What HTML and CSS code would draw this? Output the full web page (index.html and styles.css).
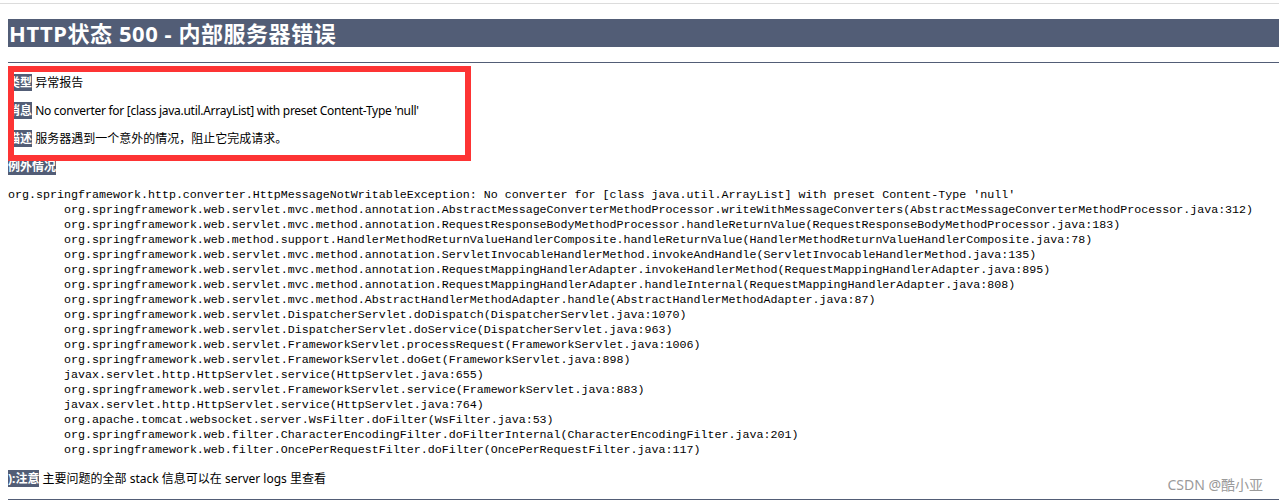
FILE: index.html
```html
<!DOCTYPE html>
<html lang="zh">
<head>
    <meta charset="UTF-8">
    <meta name="viewport" content="width=device-width, initial-scale=1.0">
    <title>HTTP状态 500 - 内部服务器错误</title>
    <link rel="stylesheet" href="styles.css">
</head>
<body>
    <div class="topline"></div>
    <div class="page">
        <h1>HTTP状态 500 - 内部服务器错误</h1>
        <hr class="line">
        <p><b>类型</b> 异常报告</p>
        <p><b>消息</b> <span class="msg">No converter for [class java.util.ArrayList] with preset Content-Type 'null'</span></p>
        <p><b>描述</b> 服务器遇到一个意外的情况，阻止它完成请求。</p>
        <p><b>例外情况</b></p>
<pre>org.springframework.http.converter.HttpMessageNotWritableException: No converter for [class java.util.ArrayList] with preset Content-Type 'null'
&#9;org.springframework.web.servlet.mvc.method.annotation.AbstractMessageConverterMethodProcessor.writeWithMessageConverters(AbstractMessageConverterMethodProcessor.java:312)
&#9;org.springframework.web.servlet.mvc.method.annotation.RequestResponseBodyMethodProcessor.handleReturnValue(RequestResponseBodyMethodProcessor.java:183)
&#9;org.springframework.web.method.support.HandlerMethodReturnValueHandlerComposite.handleReturnValue(HandlerMethodReturnValueHandlerComposite.java:78)
&#9;org.springframework.web.servlet.mvc.method.annotation.ServletInvocableHandlerMethod.invokeAndHandle(ServletInvocableHandlerMethod.java:135)
&#9;org.springframework.web.servlet.mvc.method.annotation.RequestMappingHandlerAdapter.invokeHandlerMethod(RequestMappingHandlerAdapter.java:895)
&#9;org.springframework.web.servlet.mvc.method.annotation.RequestMappingHandlerAdapter.handleInternal(RequestMappingHandlerAdapter.java:808)
&#9;org.springframework.web.servlet.mvc.method.AbstractHandlerMethodAdapter.handle(AbstractHandlerMethodAdapter.java:87)
&#9;org.springframework.web.servlet.DispatcherServlet.doDispatch(DispatcherServlet.java:1070)
&#9;org.springframework.web.servlet.DispatcherServlet.doService(DispatcherServlet.java:963)
&#9;org.springframework.web.servlet.FrameworkServlet.processRequest(FrameworkServlet.java:1006)
&#9;org.springframework.web.servlet.FrameworkServlet.doGet(FrameworkServlet.java:898)
&#9;javax.servlet.http.HttpServlet.service(HttpServlet.java:655)
&#9;org.springframework.web.servlet.FrameworkServlet.service(FrameworkServlet.java:883)
&#9;javax.servlet.http.HttpServlet.service(HttpServlet.java:764)
&#9;org.apache.tomcat.websocket.server.WsFilter.doFilter(WsFilter.java:53)
&#9;org.springframework.web.filter.CharacterEncodingFilter.doFilterInternal(CharacterEncodingFilter.java:201)
&#9;org.springframework.web.filter.OncePerRequestFilter.doFilter(OncePerRequestFilter.java:117)
</pre>
        <p><b class="note">):注意</b> 主要问题的全部 stack 信息可以在 server logs 里查看</p>
        <hr class="line">
    </div>

    <!-- screenshot annotation + watermark -->
    <div class="highlight"></div>
    <div class="watermark">CSDN @酷小亚</div>
</body>
</html>
```

FILE: styles.css
```css
body {
    margin: 0;
    background: white;
    overflow: hidden;
    position: relative;
    height: 501px;
}

.topline {
    height: 3px;
    border-bottom: 1px solid #dcdcdc;
}

.page {
    padding-left: 8px;
}

h1 {
    font-family: "Noto Sans", "Noto Sans CJK SC", sans-serif;
    font-size: 22px;
    font-weight: bold;
    letter-spacing: 0.55px;
    line-height: 28px;
    height: 28px;
    color: white;
    background-color: #525D76;
    margin: 15px 0 15px 0;
    padding-left: 1px;
    white-space: nowrap;
    overflow: hidden;
}

.line {
    height: 1px;
    background-color: #525D76;
    border: none;
    margin: 0;
}

p {
    font-family: "Noto Sans", "Noto Sans CJK SC", sans-serif;
    font-size: 12px;
    line-height: 16px;
    color: black;
    margin: 12px 0 12px 0;
}

.msg {
    letter-spacing: -0.28px;
}

b {
    color: white;
    background-color: #525D76;
    font-weight: bold;
}

pre {
    font-family: "Liberation Mono", "Noto Sans CJK SC", monospace;
    font-size: 11.67px;
    line-height: 15px;
    tab-size: 8;
    margin: 13px 0;
    color: black;
}

.highlight {
    position: absolute;
    left: 8px;
    top: 66px;
    width: 451px;
    height: 83px;
    border: 6px solid #fd3434;
}

.watermark {
    position: absolute;
    right: 16px;
    top: 474px;
    font-family: "Noto Sans", "Noto Sans CJK SC", sans-serif;
    font-size: 14px;
    color: #9a9a9a;
}
```
